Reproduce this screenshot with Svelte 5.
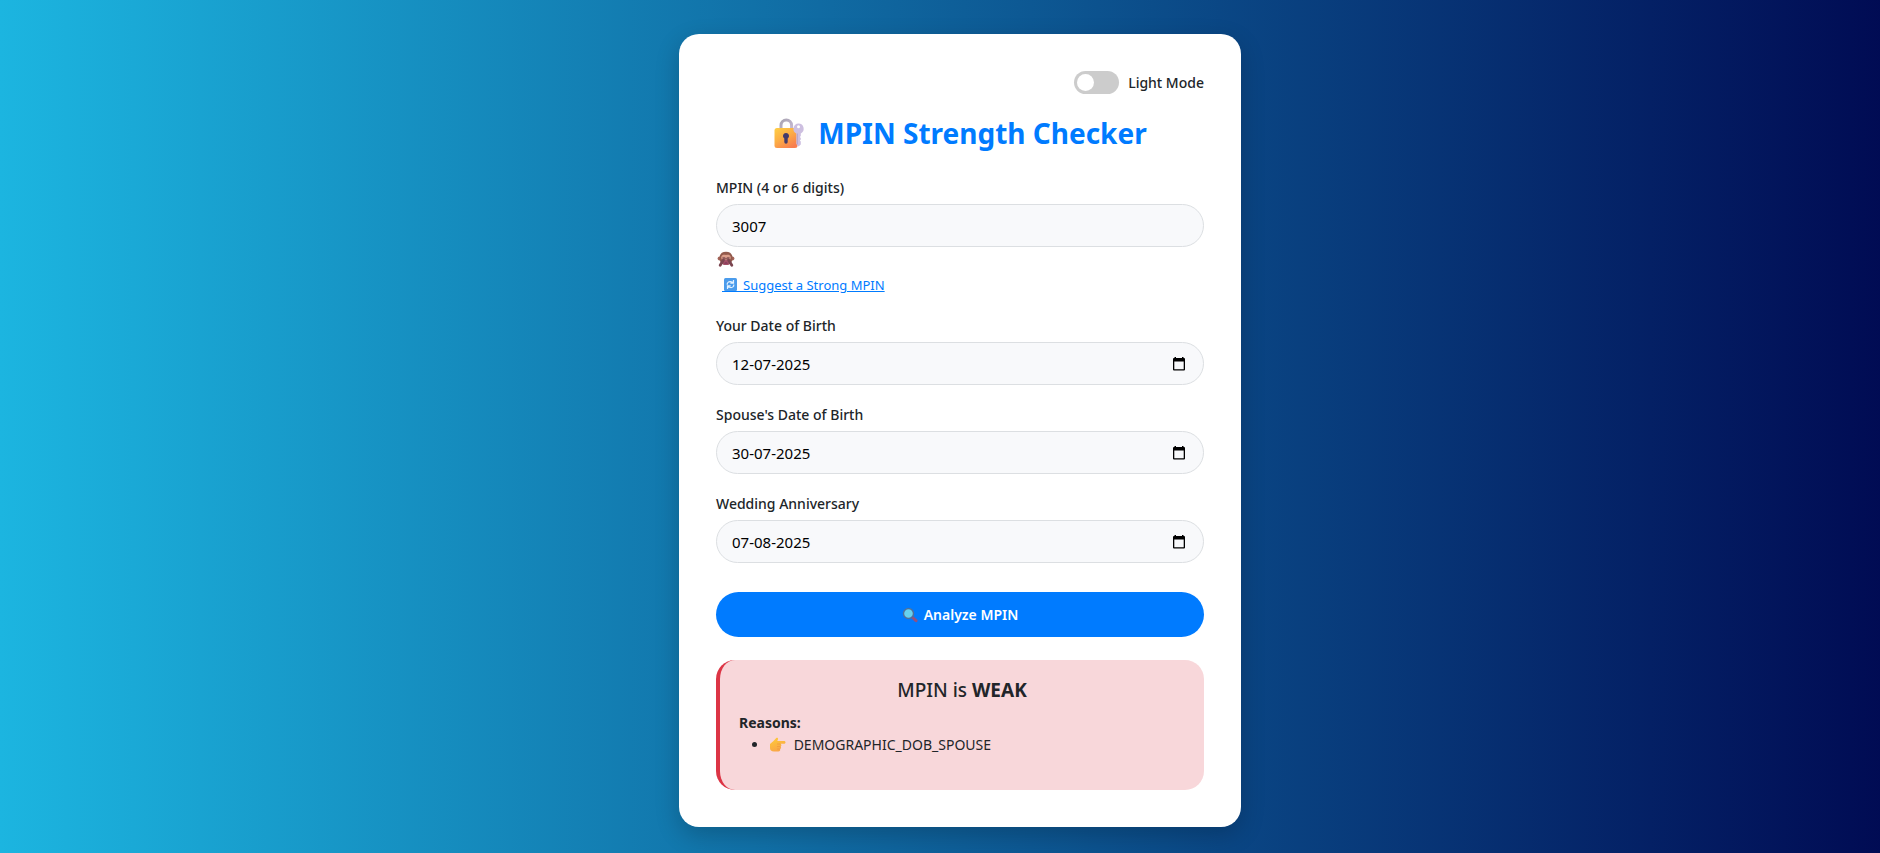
<script>
  let mpin = $state('3007');
  let dark = $state(false);
  let dates = $state([
    { id: 'dob', label: 'Your Date of Birth', value: '12-07-2025' },
    { id: 'spouse', label: "Spouse's Date of Birth", value: '30-07-2025' },
    { id: 'anniversary', label: 'Wedding Anniversary', value: '07-08-2025' }
  ]);
  const reasons = ['DEMOGRAPHIC_DOB_SPOUSE'];

  function suggest() {
    mpin = String(Math.floor(100000 + Math.random() * 900000));
  }
</script>

<main class="page">
  <form class="card" onsubmit={(e) => e.preventDefault()}>
    <label class="mode">
      <input class="switch" type="checkbox" role="switch" bind:checked={dark} />
      <span>{dark ? 'Dark Mode' : 'Light Mode'}</span>
    </label>

    <h1>
      <svg class="lock" viewBox="0 0 32 32" aria-hidden="true">
        <defs>
          <linearGradient id="lockBody" x1="0" y1="0" x2="0.7" y2="1">
            <stop offset="0" stop-color="#ffcf45" />
            <stop offset="0.5" stop-color="#fcae45" />
            <stop offset="1" stop-color="#f87e50" />
          </linearGradient>
          <linearGradient id="shackle" x1="0" y1="0" x2="1" y2="1">
            <stop offset="0" stop-color="#aaa5b4" />
            <stop offset="1" stop-color="#c6b9d3" />
          </linearGradient>
        </defs>
        <path d="M8 12V8.300a5.300 5.300 0 0 1 10.600 0V12" fill="none" stroke="url(#shackle)" stroke-width="3" />
        <rect x="1.500" y="11" width="23" height="20" rx="2.500" fill="url(#lockBody)" />
        <path d="M13 16a3 3 0 0 1 1.700 5.500V25a1.700 1.700 0 0 1-3.400 0v-3.500A3 3 0 0 1 13 16Z" fill="#433b6b" />
        <path fill-rule="evenodd" d="M25.500 6.500a5.300 5.300 0 0 1 2.300 10v2.500l-1 1 1 1v1.500l-1 1 1 1v3L25.500 29.500 23.300 27V16.500a5.300 5.300 0 0 1 2.200-10Zm0 1.800a1.500 1.500 0 1 0 0 3 1.500 1.500 0 0 0 0-3Z" fill="#cdbfe0" />
        <path d="M24.500 16.500v11" stroke="#b3a2c8" stroke-width="0.800" />
      </svg>
      <span>MPIN Strength Checker</span>
    </h1>

    <div class="field">
      <label for="mpin">MPIN (4 or 6 digits)</label>
      <input id="mpin" class="control" type="text" inputmode="numeric" maxlength="6" bind:value={mpin} />
      <button class="peek" type="button" aria-label="Toggle MPIN visibility">
        <svg viewBox="0 0 18 16" aria-hidden="true">
          <circle cx="2.600" cy="7.500" r="2" fill="#a5655a" />
          <circle cx="15.400" cy="7.500" r="2" fill="#a5655a" />
          <path d="M9 .8c4.200 0 6.500 2.400 6.500 6.200 0 4-2.500 7-6.500 7s-6.500-3-6.500-7C2.500 3.200 4.800.8 9 .8Z" fill="#925a4c" />
          <path d="M4.200 7C4 4 6.500 3 9 4c2.500-1 5 0 4.800 3L12.500 10h-7Z" fill="#dc9f8b" />
          <ellipse cx="9" cy="11.500" rx="3.600" ry="2.600" fill="#a34f68" />
          <path d="M3.200 14.200 7.300 7.600M14.800 14.200 10.700 7.600" stroke="#7b4550" stroke-width="2.800" stroke-linecap="round" />
          <path d="M6 6.500 7.700 8M12 6.500 10.300 8" stroke="#93605b" stroke-width="1.200" stroke-linecap="round" />
          <path d="M7.500 12.300q1.500-.9 3 0" stroke="#6b2d4c" stroke-width="0.800" fill="none" />
        </svg>
      </button>
      <button class="suggest" type="button" onclick={suggest}>
        <svg viewBox="0 0 21 16" aria-hidden="true">
          <rect x="2" y="1" width="13" height="13" rx="1.500" fill="#4b9cec" />
          <path d="M5.200 7.700C5 5.600 6.500 4.500 8.500 4.700l2.500.6M11.500 3v3.200H8.300M11.800 7.500c.2 2.100-1.300 3.200-3.300 3L6 9.800M5.500 12V8.900h3.200" fill="none" stroke="#e4f2ff" stroke-width="1.200" />
          <path d="M0 14h21v1H0Z" fill="#007bff" />
        </svg><span>Suggest a Strong MPIN</span>
      </button>
    </div>

    {#each dates as date (date.id)}
      <div class="field">
        <label for={date.id}>{date.label}</label>
        <div class="control picker">
          <input id={date.id} type="text" bind:value={date.value} />
          <button type="button" aria-label="Open calendar for {date.label}">
            <svg viewBox="0 0 14 14" aria-hidden="true">
              <path fill-rule="evenodd" d="M2.500 0H4v1h6V0h1.500v1H12a1 1 0 0 1 1 1v10.500a1 1 0 0 1-1 1H2a1 1 0 0 1-1-1V2a1 1 0 0 1 1-1h.5ZM2.300 4.500v7.700h9.400V4.500Z" fill="#000" />
            </svg>
          </button>
        </div>
      </div>
    {/each}

    <button class="analyze" type="submit">
      <svg viewBox="0 0 16 16" aria-hidden="true">
        <path d="m10.500 10.500 3.500 3.200" stroke="#925180" stroke-width="3" stroke-linecap="round" />
        <circle cx="6.500" cy="6.500" r="5" fill="#66d2ef" stroke="#50709b" stroke-width="1.400" />
      </svg>
      <span>Analyze MPIN</span>
    </button>

    <section class="result" aria-live="polite">
      <h2>MPIN is <strong>WEAK</strong></h2>
      <strong>Reasons:</strong>
      <ul>
        {#each reasons as reason}
          <li>
            <svg viewBox="0 0 17 16" aria-hidden="true">
              <defs>
                <linearGradient id="hand" x1="0" y1="0" x2="0.4" y2="1">
                  <stop offset="0" stop-color="#ffcc38" />
                  <stop offset="1" stop-color="#f9a747" />
                </linearGradient>
              </defs>
              <path d="M1 7 4.500 4 7 1.300c1-1 2.500-.3 2 1L8.300 4H15c2 0 2 2.800 0 2.800h-3.500c1.300.7 1.200 2.200 0 2.700 1 .8.8 2.200-.4 2.500.5 1.300-.3 2.500-1.700 2.500H5C2.300 14.500 1 13 1 11Z" fill="url(#hand)" />
              <path d="M8 7h3.500M8 9.500h3.500M8 12h3" stroke="#ee963e" stroke-width="0.700" />
            </svg>
            <span>{reason}</span>
          </li>
        {/each}
      </ul>
    </section>
  </form>
</main>

<style>
  :global(body) {
    margin: 0;
  }

  .page,
  .page * {
    box-sizing: border-box;
  }

  .page {
    display: flex;
    justify-content: center;
    align-items: flex-start;
    min-height: 100vh;
    padding: 34px 16px 26px 56px;
    background: linear-gradient(to right, #1cb5e0, #000851 102%);
    color: #212529;
    font-family: 'Segoe UI', 'Noto Sans', 'Open Sans', sans-serif;
    font-size: 15px;
    line-height: 22px;
  }

  .card {
    display: flex;
    flex-direction: column;
    width: 100%;
    max-width: 562px;
    padding: 37px;
    border-radius: 20px;
    background: #fff;
    box-shadow: 0 8px 24px rgba(0, 0, 0, 0.2);
  }

  button,
  input {
    margin: 0;
    font: inherit;
    color: inherit;
  }

  button {
    padding: 0;
    border: 0;
    background: none;
    cursor: pointer;
  }

  svg {
    display: block;
    flex: none;
  }

  .mode {
    display: flex;
    align-items: center;
    align-self: flex-end;
    gap: 9px;
    font-size: 14px;
    font-weight: 500;
  }

  .switch {
    display: flex;
    align-items: center;
    width: 45px;
    height: 23px;
    padding: 3px;
    border-radius: 12px;
    background: #ccc;
    appearance: none;
  }

  .switch::before {
    content: '';
    width: 17px;
    height: 17px;
    border-radius: 50%;
    background: #fff;
  }

  .switch:checked {
    justify-content: flex-end;
    background: #007bff;
  }

  h1 {
    display: flex;
    justify-content: center;
    align-items: center;
    gap: 13px;
    margin: 20px 0 25px;
    color: #007bff;
    font-size: 28px;
    font-weight: 700;
    line-height: 38px;
  }

  .lock {
    width: 32px;
    height: 32px;
  }

  .field {
    display: flex;
    flex-direction: column;
    align-items: flex-start;
    margin-bottom: 19px;
  }

  .field label {
    margin-bottom: 5px;
    font-size: 14px;
    font-weight: 500;
  }

  .control {
    width: 100%;
    height: 43px;
    padding: 0 15px;
    border: 1px solid #dcdfe2;
    border-radius: 22px;
    background: #f8f9fb;
    color: #000;
  }

  .picker {
    display: flex;
    align-items: center;
    padding-right: 17px;
  }

  .picker input {
    flex: 1;
    min-width: 0;
    padding: 0;
    border: 0;
    outline: 0;
    background: transparent;
  }

  .picker svg {
    width: 14px;
    height: 14px;
  }

  .peek {
    margin: 4px 0 0 1px;
  }

  .peek svg {
    width: 18px;
    height: 16px;
  }

  .suggest {
    display: flex;
    align-items: center;
    margin: 7px 0 0 6px;
    color: #007bff;
    font-size: 13px;
    text-decoration: underline;
  }

  .suggest svg {
    width: 21px;
    height: 16px;
  }

  .analyze {
    display: flex;
    justify-content: center;
    align-items: center;
    gap: 6px;
    height: 45px;
    margin: 10px 0 23px;
    border-radius: 23px;
    background: #007bff;
    color: #fff;
    font-size: 14px;
    font-weight: 600;
  }

  .analyze svg {
    width: 16px;
    height: 16px;
  }

  .result {
    padding: 19px;
    border-left: 4px solid #dc3545;
    border-radius: 19px;
    background: #f8d7da;
    font-size: 14px;
  }

  h2 {
    margin: 0 0 10px;
    font-size: 19px;
    font-weight: 500;
    line-height: 23px;
    text-align: center;
  }

  strong {
    font-weight: 700;
  }

  ul {
    margin: 0 0 15px;
    padding-left: 30px;
  }

  li svg {
    display: inline-block;
    width: 17px;
    height: 16px;
    margin-right: 4px;
    vertical-align: -3px;
  }
</style>
